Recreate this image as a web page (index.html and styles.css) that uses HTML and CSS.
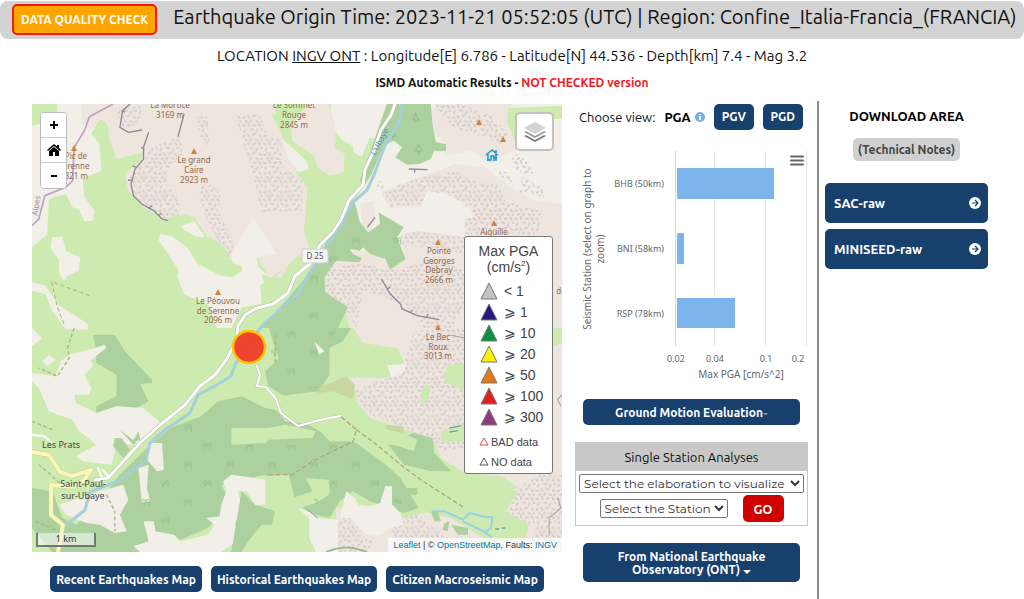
FILE: index.html
```html
<!DOCTYPE html>
<html lang="en">
<head>
<meta charset="utf-8">
<title>ISMD Earthquake Report</title>
<link rel="stylesheet" href="styles.css">
</head>
<body>
<header class="topbar">
  <button class="quality" type="button">DATA QUALITY CHECK</button>
  <h1 class="title">Earthquake Origin Time: 2023-11-21 05:52:05 (UTC) | Region: Confine_Italia-Francia_(FRANCIA)</h1>
</header>
<p class="location">LOCATION <a href="#ont">INGV ONT</a> : Longitude[E] 6.786 - Latitude[N] 44.536 - Depth[km] 7.4 - Mag 3.2</p>
<p class="status">ISMD Automatic Results - <span class="alert">NOT CHECKED version</span></p>

<main class="columns">
  <section class="map-column">
    <div class="map">
      <svg class="map-art" viewBox="32 104 530 448" preserveAspectRatio="xMidYMid slice" role="img" aria-label="Terrain map">
        <defs>
          <pattern id="scree" width="62" height="56" patternUnits="userSpaceOnUse">
            <path fill="none" stroke="#d6cdca" stroke-width="6" stroke-linecap="round" d="M4 7l5 3M20 3l2 6M35 9l6-2M52 5l3 6M11 22l-3 5M27 19l6 2M46 23l-2 5M58 20l2 1M4 41l5-1M19 36l3 5M34 37l5-3M53 38l3 4M12 52l4-1M29 49l-2 4M43 51l4 2M58 53l2-1"/>
          </pattern>
          <pattern id="trees" width="124" height="112" patternUnits="userSpaceOnUse">
            <g fill="none" stroke="#92ba86" stroke-width="2.500"><circle cx="16" cy="16" r="5"/><path d="M18 20l-3 9"/><circle cx="28" cy="15" r="5"/><path d="M32 18v12"/><circle cx="83" cy="72" r="5"/><path d="M85 76l-3 9"/><circle cx="95" cy="71" r="5"/><path d="M99 74v12"/></g>
          </pattern>
        </defs>
        <rect x="32" y="104" width="530" height="448" fill="#cdebb0"/>

        <!-- northern half -->
        <g transform="translate(32 104) scale(.338 .3333)">
          <path fill="#f2efe9" d="M0 65L25 60 25 250 5 280 0 400ZM75 0H240V50L200 45 175 90 200 120 205 200 150 225 155 280 185 320 180 350 155 352 140 318 120 310 100 270 50 285 45 390 0 430V300L25 240 100 240 100 25 75 30ZM60 400L90 398 100 440 143 460 138 500 105 515 95 530 80 510 80 470 55 430ZM0 535L40 545 75 600 165 660 165 676H100L60 620 40 570 0 560ZM885 0H1568V672H1540L1500 620 1100 480 870 470 890 380 960 280 1050 120 1000 100 975 160 930 130 885 60Z"/>
          <path fill="#eee5df" d="M145 0H720V35L740 100 800 200 820 250 805 380 820 430 760 480 740 520 700 520 665 455 620 480 590 470 520 400 480 340 420 340 400 350 330 310 285 260 275 210 320 170 330 145 250 165 230 110 225 65 205 45 175 75 150 60Z"/>
          <path fill="#eee5df" d="M820 0H880L895 60 900 110 925 130 925 205 880 215 845 190 835 155 770 110 765 70 780 40ZM1200 0H1420L1410 60 1460 130 1400 150 1360 180 1300 140 1220 155 1225 120 1195 90 1180 30ZM1035 265L1090 240 1190 205 1250 180 1340 190 1410 245 1490 290 1568 300V672H940L925 610 860 570 875 490 950 440 1020 445 1060 490 1090 470 1100 440 1090 390 1140 380 1280 400 1280 345 1305 340 1300 315 1230 270 1170 260 1150 310 1060 310ZM970 300L1010 290 1015 345 1000 385 980 365Z"/>
          <path fill="url(#scree)" d="M600 30L670 30 700 100 735 105 740 190 800 230 800 320 680 325 650 200ZM290 200L330 180 350 130 410 110 440 90 445 150 400 200 395 240 430 270 440 340 400 350 320 300 290 250ZM245 15L330 5 315 60 270 75ZM490 20L520 40 525 130 490 90ZM490 250L535 240 560 280 550 320 590 400 605 460 580 460 540 390 510 330ZM1190 0H1270L1350 30 1410 90 1390 120 1340 100 1240 70ZM1035 270L1090 240 1190 210 1210 210 1250 200 1300 230 1380 240 1400 290 1460 310 1510 320 1500 390H1280V345L1305 340 1295 315 1250 280 1170 260 1150 300 1060 310ZM1420 160L1440 150 1490 200 1470 215 1425 195ZM1380 200L1410 205 1420 235 1385 220ZM1450 220L1510 250 1515 280 1440 265ZM1020 235L1040 230 1040 255 1020 250ZM1090 395L1140 380 1280 400V450L1180 430 1100 430ZM870 490L980 480 1080 500 1190 460 1280 500V610L1240 672H1150L1100 600 980 560 960 672 925 610 865 580Z"/>
          <path fill="#f2efe9" d="M590 450L655 340 725 450 665 460 670 490 705 520 675 545 680 600 620 610 590 672H545L520 600 450 570 430 520 435 500 400 445 375 410 380 390 410 395 460 430 490 480 560 515 600 520ZM440 365L480 350 515 405 495 405 450 380ZM740 105L810 165 820 195 790 205 760 165Z"/>
          <path fill="#cdebb0" d="M708 30L740 35 735 70 770 110 830 155 840 195 880 215 922 208 925 150 895 130 900 100 950 125 950 150 985 160 1000 220 960 280 900 370 850 430 740 500 690 550 680 510 710 520 780 470 820 430 805 380 815 250 780 205 820 200 815 175 750 110ZM400 340L460 330 480 350 435 370 490 400 530 400 570 430 585 475 620 485 620 505 590 520 550 510 500 480 460 430 420 395ZM1410 12L1568 5V45H1500L1460 60 1430 110 1405 55Z"/>
          <path fill="#add19e" d="M1050 0H1180L1185 60 1195 115 1225 120V142L1190 140 1180 165 1145 180 1110 182 1075 160 1095 130 1070 110 1040 125 1005 210 985 240 970 230ZM955 295L970 355 995 385 1030 360 1025 325 1100 370 1080 400 1105 465 1060 497 1045 465 1000 450 980 430 970 440 940 435 950 450 975 462 970 475 900 470 865 520 868 565 935 610 905 672H680L760 580 835 490 885 385Z"/>
          <path fill="url(#trees)" d="M900 370H1090L1100 450 975 460 900 470 865 520 868 565 900 620 900 672H720L830 500Z"/>
          <path fill="none" stroke="#91bb85" stroke-width="3" d="M1135 28l-9 20h18zM1135 48v9M1144 122l-9 20h18zM1144 142v8M1067 78l-9 18h18zM1067 96v7"/>
          <path fill="none" stroke="#c0a2c4" stroke-width="5" d="M240 0L170 38 155 80 125 130 120 230 100 250 38 275 20 345 0 365"/>
          <path fill="none" stroke="#8c8b98" stroke-width="4" d="M290 0L268 20 260 70 285 85 325 78M450 30L432 98M345 85L330 130 330 165 305 195 293 240 300 275 325 300 360 320 385 345 403 350M275 25l-10-6M333 135l-10-5M310 190l-12-4M296 230l-12-2M345 312l10-7M375 335l7-8M1115 195L1170 197M1132 198v8M992 370L1015 340M1034 525L1060 570 1090 600 1095 615 1140 635 1205 647M1052 555l8-6M1120 628l5-10M1167 640l4-9"/>
          <path fill="none" stroke="#a2b489" stroke-width="3" stroke-dasharray="12 8" d="M170 575L58 533 75 610 95 660"/>
        </g>

        <!-- southern half -->
        <g transform="translate(32 328) scale(.338 .3333)">
          <path fill="#eee5df" d="M950 0H1568V672H900V540L1100 570 1440 480 1390 445 1280 435 1210 390 1190 340 1120 310 1060 290 1000 270 960 230 960 190 930 150 1045 150 1080 140 1100 100 1080 60 980 45Z"/>
          <path fill="url(#scree)" d="M1130 10L1280 0V360L1220 370 1100 300 1000 260 950 190 1020 160 1090 140ZM1440 480L1500 440H1568V672H1470L1490 600 1400 560ZM1060 580L1140 560 1200 600 1250 672H1080ZM910 560L960 530 970 620 1010 640 990 672H900Z"/>
          <path fill="#add19e" d="M180 20L245 20 275 70 355 155V165L320 168 345 220 300 245 260 235 190 255 190 235 250 205 250 140 190 105 190 65ZM0 480L60 490 90 570 130 590 200 520 250 450 330 370 410 300 500 265 550 220 620 205 690 240 740 250 800 280 870 320 960 345 1060 420 1100 430 1145 540 1100 555 1000 520 950 490 910 520 880 570 820 555 780 520 690 440 560 470 590 530 520 600 430 640 360 672H60L0 600ZM700 0H945L920 40 880 60 880 140 850 190 760 200 735 230 700 190 690 130 730 90ZM1050 345L1130 315 1185 330 1190 375 1240 430 1180 430 1100 410ZM620 500L660 530 720 550 710 590 680 590 640 640 620 672H590L600 580Z"/>
          <path fill="#cdebb0" d="M590 300L700 300 750 290 840 310 830 330 700 335 690 345 590 350ZM655 145L740 200 800 210 870 200 950 210 1000 270 1140 335 1130 370 1070 350 1050 350 1100 410 1180 430 1240 435 1390 445 1370 480 1440 490 1400 550 1470 590 1460 640 1350 640 1240 570 1150 550 1090 450 960 330 950 340 880 340 835 290 750 280 710 230 660 205 580 190 600 170 640 165ZM680 445L760 440 780 520 770 672H640L710 590 720 545 690 530ZM810 450L880 455 880 500 840 525 790 540 770 510 830 490ZM1230 110L1280 105V190L1220 160ZM1155 180L1180 170 1170 225 1150 225ZM1210 310L1280 290V340L1210 340ZM1540 0H1568V45L1535 60Z"/>
          <path fill="#c8d6a2" d="M850 180L930 145 955 170 950 215 890 190 845 195ZM1045 290L1100 295 1100 315 1050 305Z"/>
          <path fill="#f2efe9" d="M0 0L30 30 0 55ZM30 100L50 80 70 95 45 115ZM215 50L220 60 175 95 180 115 155 140 175 180 170 200 125 200 130 225 190 255 250 235 330 240 380 285 310 350 250 350 235 410 150 400 130 385 190 350 140 310 120 275 50 250 20 180 0 160V135L70 145 85 100 110 80 170 65ZM348 345L385 345 390 425 370 430 340 395ZM315 420L345 410 340 480 350 520 325 525ZM80 530L200 490 270 470 285 515 260 560 280 610 245 615 200 590 160 585 100 560ZM330 580L360 580 365 610 420 620 440 640 520 620 540 590 515 570 555 565 560 530 575 490 565 460 590 440 660 450 690 455 690 530 660 530 635 490 610 490 620 540 600 590 625 600 605 640 560 672H320L300 655 345 640ZM835 40L865 70 850 80ZM1050 112L1110 108 1095 135 1065 150ZM785 540L830 555 850 570 905 575 905 672H840L820 630 820 570ZM930 490L955 510 965 530 1000 535 1030 525 1045 475 1065 475 1065 530 1090 555 1100 590 1060 600 1030 620 990 620 960 590 945 570 910 570Z"/>
          <path fill="#add19e" d="M245 330L265 330 290 365 270 390 240 355ZM260 305L310 345 300 350ZM295 345L315 310 320 335ZM620 490L660 530 620 672H590ZM1180 550L1200 550 1210 580 1190 580ZM1220 585L1235 580 1230 610 1215 605ZM1240 590L1290 600 1290 620 1260 620ZM1100 480L1140 480 1140 500 1115 500Z"/>
          <path fill="url(#trees)" d="M700 0H900L850 180 720 190ZM410 310L560 230 590 350H940L1070 440 1100 530 950 480 870 560 760 430 590 430 540 540 400 600 280 600 300 520 410 450Z"/>
          <path fill="none" stroke="#a8b681" stroke-width="4" stroke-dasharray="11 7" d="M125 0L105 60 110 90 75 145 20 120M0 280L60 305M20 410L100 480M220 500L245 550 245 610M720 20V110M10 580L80 610"/>
          <path fill="none" stroke="#b0a87a" stroke-width="4" stroke-dasharray="14 7" d="M700 440L770 440 830 400 900 365 950 340 960 305 915 267M960 305L1020 350 1090 410 1150 455 1280 540"/>
          <path fill="none" stroke="#9ccfe6" stroke-width="6" d="M1185 550L1220 550 1275 575 1295 555 1330 565 1362 568 1358 600 1340 612 1275 580M1340 612L1360 628"/>
          <path fill="none" stroke="#a9a0a0" stroke-width="3" d="M1240 22L1280 30M1555 510L1565 540 1530 570 1530 620M815 545L845 570M1568 200L1555 215 1565 235"/>
          <path fill="none" stroke="#6ba6a4" stroke-width="4" d="M1235 300L1270 293M1235 312L1260 308M1370 603h12M1390 600h10"/>
          <path fill="none" stroke="#8fb887" stroke-width="5" d="M870 672Q930 645 990 672"/>
        </g>

        <!-- river and roads -->
        <g fill="none" stroke-linejoin="round" stroke-linecap="round">
          <path stroke="#a5cfd9" stroke-width="3" d="M403 104L399 122 385 145 374 175 367 190 352 203 345 220 330 240 318 260 305 280 298 294 288 301 276 313 262 326 248 344 235 365 231 376 215 386 198 395 190 413 165 430 150 443 146 460 120 480 90 492 85 510 66 525"/>
          <path stroke="#b8b5ab" stroke-width="4" d="M395 104L391 115 381 130 374 150 365 170 363 185 349 200 341 220 333 232 320 245 312 262 295 276 288 293 273 304 257 308 245 315 238 326 236 342 226 360 215 375 200 386 185 405 160 425 140 443 120 465 108 478 95 480"/>
          <path stroke="#fff" stroke-width="3" d="M395 104L391 115 381 130 374 150 365 170 363 185 349 200 341 220 333 232 320 245 312 262 295 276 288 293 273 304 257 308 245 315 238 326 236 342 226 360 215 375 200 386 185 405 160 425 140 443 120 465 108 478 95 480"/>
          <path stroke="#c4c2b4" stroke-width="3" d="M257 366L260 375 257 386 266 387 276 399 281 413 298 426 320 420 340 416"/>
          <path stroke="#fff" stroke-width="2" d="M257 366L260 375 257 386 266 387 276 399 281 413 298 426 320 420 340 416M32 435L44 436 52 443M102 478L98 468M108 476L103 470"/>
          <path stroke="#c9cc93" stroke-width="5" d="M32 452L49 455 60 472 72 476 91 470 84 480 74 487 51 485 51 515 63 525 58 552"/>
          <path stroke="#f6f7b8" stroke-width="4" d="M32 452L49 455 60 472 72 476 91 470 84 480 74 487 51 485 51 515 63 525 58 552"/>
        </g>
        <path fill="#d08240" d="M191 154l3-6 3 6zM71 151l3-6 3 6zM215 295l3-6 3 6zM435 245l3-6 3 6zM491 226l3-6 3 6zM435 330l3-6 3 6zM476 125l3-6 3 6zM500 142l3-6 3 6z"/>
        <path fill="none" stroke="#1b97d4" stroke-width="1.500" d="M486 155l6-5 6 5M488 154v7M496 150v11M487 160h4v-4h3v5M493 158h4"/>
        <rect x="302" y="249" width="26" height="14" rx="2" fill="#f6f6f2" stroke="#ccc"/>
        <g class="place-names" text-anchor="middle">
          <g class="peak">
            <text x="170" y="108">La Mortice</text><text x="170" y="118">3169 m</text>
            <text x="294" y="108">Le Sommet</text><text x="294" y="118">Rouge</text><text x="294" y="128">2845 m</text>
            <text x="194" y="163">Le grand</text><text x="194" y="173">Caire</text><text x="194" y="183">2923 m</text>
            <text x="76" y="159">Pic de</text><text x="74" y="169">Serenne</text><text x="74" y="179">2821 m</text>
            <text x="218" y="304">Le Péouvou</text><text x="218" y="314">de Serenne</text><text x="218" y="323">2096 m</text>
            <text x="439" y="254">Pointe</text><text x="439" y="264">Georges</text><text x="439" y="273">Debray</text><text x="439" y="283">2666 m</text>
            <text x="494" y="235">Aiguille</text><text x="438" y="340">Le Bec</text><text x="438" y="350">Roux</text><text x="438" y="359">3013 m</text><text x="561" y="294">de</text>
          </g>
          <text class="village" x="61" y="448">Les Prats</text>
          <text class="village" x="83" y="487">Saint-Paul-</text><text class="village" x="83" y="499">sur-Ubaye</text>
          <text class="road-name" x="315" y="259">D 25</text>
          <text class="river-name" transform="translate(382 143) rotate(-62)">L'Ubaye</text>
          <text class="border-name" transform="translate(39 206) rotate(-82)">Alpes</text>
        </g>
        <circle cx="249" cy="347" r="16" fill="#f03b28" fill-opacity=".95" stroke="#ffc400" stroke-width="2.500"/>
      </svg>
      <div class="zoom-bar">
        <button type="button" aria-label="Zoom in"><svg viewBox="0 0 12 12"><path d="M6 2v8M2 6h8"/></svg></button>
        <button type="button" aria-label="Home"><svg viewBox="0 0 14 12" class="home"><path d="M7 0l3 2.500V1h2v3l2 2-1 1-6-5-6 5-1-1zM7 3l5 4v5H8V8H6v4H2V7z"/></svg></button>
        <button type="button" aria-label="Zoom out"><svg viewBox="0 0 12 12"><path d="M3 6h6"/></svg></button>
      </div>
      <button class="layers" type="button" aria-label="Layers">
        <svg viewBox="0 0 24 22"><path fill="#777" d="M1 15l11-5 11 5-11 6z"/><path fill="#fff" d="M1 13l11-5 11 5-11 6z"/><path fill="#999" d="M1 11l11-5 11 5-11 6z"/><path fill="#fff" d="M1 9l11-5 11 5-11 6z"/><path fill="#d3d3d3" d="M1 7l11-6 11 6-11 6z"/></svg>
      </button>
      <aside class="legend">
        <h2>Max PGA<br>(cm/s<sup>2</sup>)</h2>
        <ul>
          <li><svg viewBox="0 0 20 18"><path fill="#c4c4c4" d="M10 1l8 16H2z"/></svg>&lt; 1</li>
          <li><svg viewBox="0 0 20 18"><path fill="#27187e" d="M10 1l8 16H2z"/></svg>⩾ 1</li>
          <li><svg viewBox="0 0 20 18"><path fill="#07923e" d="M10 1l8 16H2z"/></svg>⩾ 10</li>
          <li><svg viewBox="0 0 20 18"><path fill="#ffef00" d="M10 1l8 16H2z"/></svg>⩾ 20</li>
          <li><svg viewBox="0 0 20 18"><path fill="#e67817" d="M10 1l8 16H2z"/></svg>⩾ 50</li>
          <li><svg viewBox="0 0 20 18"><path fill="#e1201d" d="M10 1l8 16H2z"/></svg>⩾ 100</li>
          <li><svg viewBox="0 0 20 18"><path fill="#93397f" d="M10 1l8 16H2z"/></svg>⩾ 300</li>
          <li class="small"><svg viewBox="0 0 10 10"><path class="bad" d="M5 1l4 7H1z"/></svg>BAD data</li>
          <li class="small"><svg viewBox="0 0 10 10"><path class="none" d="M5 1l4 7H1z"/></svg>NO data</li>
        </ul>
      </aside>
      <div class="scale">1 km</div>
      <div class="credits"><a href="#leaflet">Leaflet</a> | © <a href="#osm">OpenStreetMap</a>, Faults: <a href="#ingv">INGV</a></div>
    </div>
    <nav class="map-links">
      <button class="btn" type="button">Recent Earthquakes Map</button>
      <button class="btn" type="button">Historical Earthquakes Map</button>
      <button class="btn" type="button">Citizen Macroseismic Map</button>
    </nav>
  </section>

  <section class="analysis">
    <div class="views">
      <span class="choose">Choose view:</span>
      <strong>PGA</strong>
      <svg class="info" viewBox="0 0 10 10"><circle cx="5" cy="5" r="5" fill="#74b0e4"/><path d="M4 2h2v1.300H4zM4 4.300h2V8H4z" fill="#fff"/></svg>
      <button class="btn" type="button">PGV</button>
      <button class="btn" type="button">PGD</button>
    </div>
    <svg class="chart" viewBox="575 140 233 250" role="img" aria-label="Max PGA by station">
      <path d="M714.500 151V346M765.500 151V346M806.500 151V346" stroke="#e6e6e6" fill="none"/>
      <path d="M675.500 151V346" stroke="#ccd6eb" fill="none"/>
      <path fill="#7cb5ec" d="M677 168H774V199H677ZM677 233H684V264H677ZM677 298H735V328H677Z"/>
      <path stroke="#666" stroke-width="2" stroke-linecap="round" d="M791 156.500H803M791 160.500H803M791 164.500H803"/>
      <g class="chart-label" text-anchor="end"><text x="664" y="187">BHB (50km)</text><text x="664" y="252">BNI (58km)</text><text x="664" y="317">RSP (78km)</text></g>
      <g class="chart-label" text-anchor="middle"><text x="676" y="362">0.02</text><text x="715" y="362">0.04</text><text x="766" y="362">0.1</text><text x="798" y="362">0.2</text></g>
      <g class="axis-title" text-anchor="middle"><text x="741" y="378">Max PGA [cm/s^2]</text>
      <text transform="translate(591 249) rotate(-90)">Seismic Station (select on graph to</text><text transform="translate(604 249) rotate(-90)">zoom)</text></g>
    </svg>
    <button class="btn wide" type="button">Ground Motion Evaluation<svg class="dash" viewBox="0 0 6 6"><path d="M0 2h6L4 4H2z"/></svg></button>
    <form class="station">
      <h2>Single Station Analyses</h2>
      <div class="fields">
        <select class="elab" aria-label="Elaboration"><option>Select the elaboration to visualize</option></select>
        <div class="pick"><select class="sta" aria-label="Station"><option>Select the Station</option></select>
        <button class="go" type="button">GO</button></div>
      </div>
    </form>
    <button class="btn wide ont" type="button">From National Earthquake<br>Observatory (ONT) <svg class="caret" viewBox="0 0 8 4"><path d="M0 0h8L4 4z"/></svg></button>
  </section>

  <aside class="downloads">
    <h2>DOWNLOAD AREA</h2>
    <a class="notes" href="#notes">(Technical Notes)</a>
    <button class="btn file" type="button">SAC-raw<svg viewBox="0 0 12 12"><circle cx="6" cy="6" r="6" fill="#fff"/><path d="M3 6h6M6 3l3 3-3 3" fill="none" stroke="#18406d" stroke-width="1.200"/></svg></button>
    <button class="btn file" type="button">MINISEED-raw<svg viewBox="0 0 12 12"><circle cx="6" cy="6" r="6" fill="#fff"/><path d="M3 6h6M6 3l3 3-3 3" fill="none" stroke="#18406d" stroke-width="1.200"/></svg></button>
  </aside>
</main>
</body>
</html>
```
FILE: styles.css
```css
* { box-sizing: border-box; }
body { margin: 0; padding-top: 1px; min-height: 100vh; display: flex; flex-direction: column; background: #fff; color: #111; font-family: Ubuntu, "Noto Sans", sans-serif; }
h1, h2, p, ul { margin: 0; padding: 0; }
button { font-family: inherit; cursor: pointer; }
.topbar { display: flex; align-items: flex-start; gap: 16px; min-height: 38px; padding: 3px 12px; background: #d3d3d3; border-radius: 8px; }
.quality { flex: none; height: 31px; padding: 0 7px; border: 2px solid #f01a10; border-radius: 5px; background: #ffa500; color: #fff; font-size: 12px; font-weight: 700; white-space: nowrap; }
.title { font-size: 20px; line-height: 26px; font-weight: 400; white-space: nowrap; }
.location { margin-top: 5px; text-align: center; font-size: 15px; line-height: 24px; }
.location a { color: inherit; }
.status { margin-top: 7px; text-align: center; font-size: 12px; line-height: 16px; font-weight: 700; }
.alert { color: #ee1c25; }
.columns { flex: 1; display: grid; grid-template-columns: minmax(0, 1fr) 255px 207px; margin-top: 10px; padding-left: 32px; }

.map-column { padding-top: 3px; }
.map { position: relative; aspect-ratio: 530 / 448; overflow: hidden; }
.map-art { display: block; width: 100%; height: 100%; }
.place-names { font-family: "Noto Sans", sans-serif; font-size: 8px; }
.peak { fill: #926b4c; }
.place-names .village { font-size: 9px; fill: #444; }
.road-name { fill: #555; }
.river-name { fill: #668fbd; }
.border-name { fill: #a58aae; }
.zoom-bar { position: absolute; top: 8px; left: 8px; width: 27px; border: 1px solid #bbb; border-radius: 4px; background: #fff; overflow: hidden; }
.zoom-bar button { display: flex; align-items: center; justify-content: center; width: 100%; height: 25px; padding: 0; border: 0; border-bottom: 1px solid #ccc; background: #fff; }
.zoom-bar button:last-child { border-bottom: 0; }
.zoom-bar svg { width: 12px; height: 12px; stroke: #000; stroke-width: 2; fill: none; }
.zoom-bar .home { width: 14px; stroke: none; fill: #000; }
.layers { position: absolute; top: 8px; right: 8px; display: flex; align-items: center; justify-content: center; width: 39px; height: 39px; padding: 0; border: 2px solid #c4c2bd; border-radius: 5px; background: #fff; }
.layers svg { width: 24px; height: 22px; }
.legend { position: absolute; top: 132px; right: 9px; width: 89px; padding: 6px 0 1px; border: 1px solid #777; border-radius: 3px; background: #fff; color: #444; font-family: "Liberation Sans", Arial, sans-serif; }
.legend h2 { font-size: 14px; line-height: 16px; font-weight: 400; text-align: center; }
.legend sup { font-size: 8px; line-height: 0; }
.legend ul { list-style: none; padding: 5px 0 0 14px; }
.legend li { display: flex; align-items: center; gap: 5px; height: 21px; font-size: 14px; white-space: nowrap; }
.legend li svg { width: 20px; height: 18px; stroke: #777; stroke-width: 1; }
.legend .small { height: 20px; font-size: 11px; gap: 2px; }
.legend .small svg { width: 10px; height: 10px; fill: none; }
.legend .small .bad { stroke: #d9534f; }
.legend .small .none { stroke: #555; }
.legend li:nth-child(8) { margin-top: 5px; }
.scale { position: absolute; left: 4px; bottom: 5px; width: 60px; height: 14px; border: 2px solid #777; border-top: 0; background: rgba(255,255,255,.5); color: #333; text-align: center; font: 9px/12px "Noto Sans", sans-serif; }
.credits { position: absolute; right: 0; bottom: 0; padding: 0 5px; background: rgba(255,255,255,.7); color: #333; font: 9px/14px "Liberation Sans", Arial, sans-serif; }
.credits a { color: #0078a8; text-decoration: none; }
.map-links { display: flex; justify-content: center; gap: 9px; padding: 14px 0 0; }
.btn { border: 0; border-radius: 5px; background: #18406d; color: #fff; font-size: 12px; font-weight: 700; white-space: nowrap; }
.map-links .btn { height: 26px; padding: 0 6px; }

.analysis { padding: 2px 9px 0 13px; }
.views { display: flex; align-items: center; height: 27px; padding: 0 4px; font-size: 13px; white-space: nowrap; }
.views strong { margin-left: 9px; color: #000; }
.info { flex: none; width: 10px; height: 10px; margin: 0 9px 0 4px; }
.views .btn { flex: none; width: 40px; height: 26px; padding: 0; }
.views .btn + .btn { margin-left: 9px; }
.chart { display: block; width: 100%; margin-top: 10px; }
.chart text { fill: #666; font-family: "Noto Sans", sans-serif; }
.chart-label { font-size: 9px; }
.axis-title { font-size: 10px; }
.wide { display: block; width: calc(100% - 16px); height: 26px; margin: 9px 8px 0; padding: 0; }
.dash { width: 5px; height: 6px; fill: #9db4cc; }
.station { margin-top: 17px; border: 1px solid #c8c8c8; }
.station h2 { background: #c8c8c8; font-size: 13px; line-height: 28px; font-weight: 400; text-align: center; }
.fields { display: flex; flex-direction: column; align-items: center; gap: 2px; padding: 3px 0; }
.fields select { height: 19px; padding: 0; border: 1px solid #777; border-radius: 2px; background: #fff; color: #333; font-family: Montserrat, "Open Sans", sans-serif; font-size: 12px; }
.fields .elab { width: 225px; }
.fields .sta { width: 128px; }
.pick { display: flex; align-items: center; gap: 15px; }
.go { width: 41px; height: 27px; padding: 0; border: 0; border-radius: 5px; background: #d00000; color: #fff; font-size: 13px; font-weight: 600; }
.ont { height: 39px; margin-top: 17px; line-height: 13px; }
.caret { width: 8px; height: 4px; fill: #fff; }

.downloads { display: flex; flex-direction: column; align-items: flex-start; padding: 5px 36px 0 6px; border-left: 2px solid #888; }
.downloads h2 { align-self: center; font-size: 13px; line-height: 20px; color: #000; }
.notes { align-self: center; margin-top: 12px; padding: 0 5px; border-radius: 5px; background: #d0d0d0; color: #444; font-size: 12px; line-height: 23px; font-weight: 600; text-decoration: none; white-space: nowrap; }
.file { display: flex; align-items: center; justify-content: space-between; width: 100%; height: 40px; margin-top: 22px; padding: 0 7px 0 9px; font-size: 13px; }
.file + .file { margin-top: 6px; }
.file svg { width: 12px; height: 12px; }
```
